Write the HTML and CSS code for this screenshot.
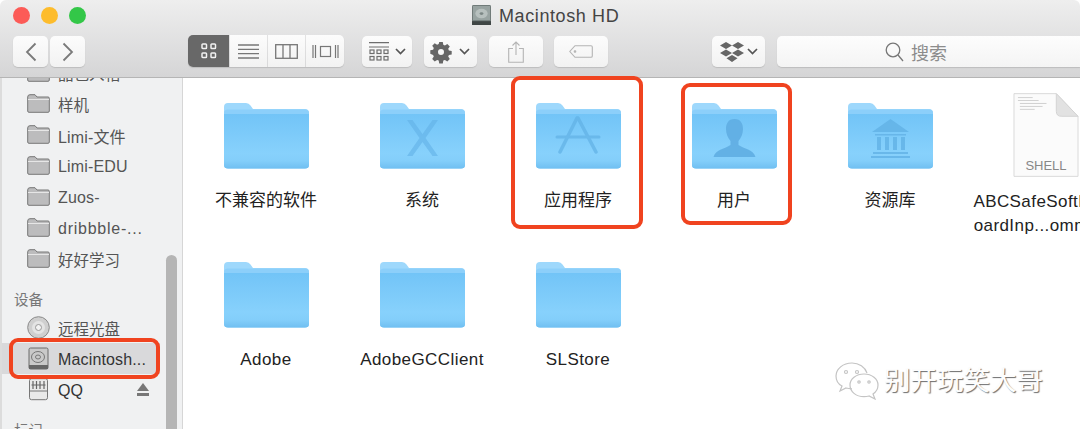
FILE: index.html
```html
<!DOCTYPE html>
<html lang="zh">
<head>
<meta charset="utf-8">
<title>Macintosh HD</title>
<link rel="stylesheet" href="styles.css">
</head>
<body>
<svg class="defs" width="0" height="0" aria-hidden="true">
  <defs>
    <linearGradient id="fb" x1="0" y1="0" x2="0" y2="1">
      <stop offset="0" stop-color="#72c4f7"/><stop offset=".72" stop-color="#87d1fc"/><stop offset=".86" stop-color="#83cefa"/><stop offset="1" stop-color="#70bfF1"/>
    </linearGradient>
    <symbol id="folder" viewBox="0 0 85 67">
      <path d="M0 5Q0 1 4 1H22Q25 1 26.500 3.500L29 7H81Q85 7 85 11V20H0Z" fill="#9ed8fc"/>
      <path d="M0 11Q0 7.500 4 7.500H81Q85 7.500 85 11V63Q85 66.500 81 66.500H4Q0 66.500 0 63Z" fill="#8ccffa"/>
      <path d="M0 12H85V63Q85 66.500 81 66.500H4Q0 66.500 0 63Z" fill="url(#fb)"/>
    </symbol>
    <symbol id="mini" viewBox="0 0 23 19">
      <path d="M.7 3Q.7 .7 3 .7H8L10 3H21Q22.300 3 22.300 4.300V17Q22.300 18.300 21 18.300H2Q.7 18.300 .7 17Z" fill="#bcbcbd" stroke="#777"/>
      <path d="M1 5.500H22" stroke="#e6e6e6"/>
    </symbol>
  </defs>
</svg>

<div class="window">
  <header class="toolbar">
    <div class="titlebar">
      <div class="lights"><i class="light red"></i><i class="light yellow"></i><i class="light green"></i></div>
      <div class="title">
        <svg class="title-icon" viewBox="0 0 20 21"><rect x="0" y="0" width="20" height="21" rx="1.500" fill="#6f7a78"/><rect x="1" y="1" width="18" height="15" fill="#98a3a1"/><ellipse cx="10" cy="9" rx="6.500" ry="5" fill="#b7c0be"/><ellipse cx="10" cy="9" rx="2" ry="1.500" fill="#7c8785"/><rect x="0" y="17" width="20" height="4" fill="#3f4645"/></svg>
        <span>Macintosh HD</span>
      </div>
    </div>
    <div class="tools">
      <div class="nav">
        <button class="btn nav-btn"><svg width="12" height="20" viewBox="0 0 12 20"><path d="M10.500 1.500L2 10l8.500 8.500" class="st"/></svg></button>
        <button class="btn nav-btn"><svg width="12" height="20" viewBox="0 0 12 20"><path d="M1.500 1.500L10 10l-8.500 8.500" class="st"/></svg></button>
      </div>
      <div class="views">
        <button class="view active"><svg width="16" height="16" viewBox="0 0 16 16" fill="none" stroke="#f2f2f2" stroke-width="1.500"><rect x="1" y="1" width="4.500" height="4.500" rx=".8"/><rect x="10" y="1" width="4.500" height="4.500" rx=".8"/><rect x="1" y="10" width="4.500" height="4.500" rx=".8"/><rect x="10" y="10" width="4.500" height="4.500" rx=".8"/></svg></button>
        <button class="view w37"><svg width="21" height="15" viewBox="0 0 21 15" stroke="#777" stroke-width="1.300"><path d="M0 1H21M0 5.300H21M0 9.600H21M0 14H21"/></svg></button>
        <button class="view w38"><svg width="23" height="15" viewBox="0 0 23 15" fill="none" stroke="#777" stroke-width="1.300"><rect x=".7" y=".7" width="21.600" height="13.600"/><path d="M8 1V14M15 1V14"/></svg></button>
        <button class="view w38"><svg width="27" height="15" viewBox="0 0 27 15" fill="none" stroke="#777" stroke-width="1.200"><rect x="8.500" y="2.500" width="10" height="10"/><path d="M1 1V14M3.500 1V14M23.500 1V14M26 1V14"/></svg></button>
      </div>
      <button class="btn w50 arrange">
        <svg width="20" height="19" viewBox="0 0 20 19" fill="none" stroke="#6e6e6e" stroke-width="1.200"><path d="M0 .7H20M0 5H20"/><rect x="1" y="8" width="4" height="3.500"/><rect x="8" y="8" width="4" height="3.500"/><rect x="15" y="8" width="4" height="3.500"/><rect x="1" y="14.500" width="4" height="3.500"/><rect x="8" y="14.500" width="4" height="3.500"/><rect x="15" y="14.500" width="4" height="3.500"/></svg>
        <svg width="11" height="7" viewBox="0 0 11 7"><path d="M1 1l4.500 4.500L10 1" class="chev"/></svg>
      </button>
      <button class="btn w53 action">
        <svg width="20" height="20" viewBox="0 0 20 20"><path d="M8.200 0h3.600l.5 2.800 1.600.7 2.400-1.600 2.500 2.500-1.600 2.400.7 1.600 2.800.5v3.600l-2.800.5-.7 1.600 1.600 2.400-2.500 2.500-2.400-1.600-1.600.7-.5 2.800H8.200l-.5-2.800-1.600-.7-2.400 1.600-2.500-2.500 1.600-2.400-.7-1.600L-.7 11.800V8.200l2.800-.5.7-1.600L1.200 3.700l2.500-2.500 2.400 1.600 1.600-.7zM10 7a3 3 0 100 6 3 3 0 000-6z" fill="#666" fill-rule="evenodd"/></svg>
        <svg width="11" height="7" viewBox="0 0 11 7"><path d="M1 1l4.500 4.500L10 1" class="chev"/></svg>
      </button>
      <button class="btn w54 share"><svg width="16" height="22" viewBox="0 0 16 22" fill="none" stroke="#b4b4b4" stroke-width="1.100"><path d="M5 7.500H.7V21.300H15.300V7.500H11M8 14V1M4.500 4.500L8 1l3.500 3.500"/></svg></button>
      <button class="btn w54 tag"><svg width="24" height="13" viewBox="0 0 24 13" fill="none" stroke="#b4b4b4" stroke-width="1.100"><path d="M6 .7H22Q23.300 .7 23.300 2V11Q23.300 12.300 22 12.300H6L.8 6.500Z"/><circle cx="6" cy="6.500" r=".8" fill="#b4b4b4"/></svg></button>
      <button class="btn w53 dropbox">
        <svg width="24" height="20" viewBox="0 0 24 20" fill="#666"><path d="M6 0l6 3.500L6 7 0 3.500zM18 0l6 3.500L18 7l-6-3.500zM6 7.500l6 3.500-6 3.500L0 11zM18 7.500l6 3.500-6 3.500-6-3.500zM12 13l5.500 3.300L12 20l-5.500-3.700z"/></svg>
        <svg width="11" height="7" viewBox="0 0 11 7"><path d="M1 1l4.500 4.500L10 1" class="chev"/></svg>
      </button>
      <div class="search">
        <svg width="19" height="20" viewBox="0 0 19 20" fill="none" stroke="#777" stroke-width="1.300"><circle cx="8" cy="8" r="6.800"/><path d="M13 13l5 6"/></svg>
        <span>搜索</span>
      </div>
    </div>
  </header>

  <div class="body">
    <aside class="sidebar">
      <div class="side-list">
        <div class="row"><svg class="side-icon"><use href="#mini"/></svg><span>品包入相</span></div>
        <div class="row"><svg class="side-icon"><use href="#mini"/></svg><span>样机</span></div>
        <div class="row"><svg class="side-icon"><use href="#mini"/></svg><span class="latin">Limi-文件</span></div>
        <div class="row"><svg class="side-icon"><use href="#mini"/></svg><span class="latin">Limi-EDU</span></div>
        <div class="row"><svg class="side-icon"><use href="#mini"/></svg><span class="latin">Zuos-</span></div>
        <div class="row"><svg class="side-icon"><use href="#mini"/></svg><span class="latin wide">dribbble-...</span></div>
        <div class="row"><svg class="side-icon"><use href="#mini"/></svg><span>好好学习</span></div>
        <div class="side-head">设备</div>
        <div class="row"><svg class="side-icon" viewBox="0 0 23 23"><circle cx="11.500" cy="11.500" r="10.800" fill="#cfcfcf" stroke="#8a8a8a"/><circle cx="11.500" cy="11.500" r="6.500" fill="#e4e4e4"/><circle cx="11.500" cy="11.500" r="3" fill="#f3f3f3" stroke="#999"/></svg><span>远程光盘</span></div>
        <div class="row selected"><svg class="side-icon" viewBox="0 0 23 23"><rect x="2" y="1" width="19" height="21" rx="1.500" fill="#c9c9c9" stroke="#6b6b6b"/><ellipse cx="11" cy="10" rx="6.500" ry="5.500" fill="none" stroke="#777"/><ellipse cx="11" cy="10" rx="2.500" ry="2" fill="none" stroke="#777"/><rect x="2" y="18" width="19" height="4" fill="#666"/></svg><span class="dark latin">Macintosh...</span></div>
        <div class="row"><svg class="side-icon" viewBox="0 0 23 23"><rect x="2.500" y=".7" width="18" height="21" rx="2" fill="#e9e9e9" stroke="#777"/><path d="M2.500 13H20.500" stroke="#777"/><path d="M6 3V11M9.500 3V11M13 3V11M17 3V11M4.500 7H18.500" stroke="#666" stroke-width="1.200"/></svg><span class="dark latin">QQ</span><svg class="eject" width="12" height="13" viewBox="0 0 12 13" fill="#777"><path d="M6 0l6 8H0zM0 10h12v3H0z"/></svg></div>
        <div class="side-head">标记</div>
      </div>
      <div class="scrollbar"><div class="thumb"></div></div>
    </aside>

    <main class="files">
      <div class="cell"><svg class="folder"><use href="#folder"/></svg><div class="label">不兼容的软件</div></div>
      <div class="cell">
        <svg class="folder" viewBox="0 0 85 67"><use href="#folder"/><path d="M27 18H32.500L42.500 32 52.500 18H58L45.500 36 58 54H52.500L42.500 40 32.500 54H27L39.500 36Z" fill="#62b2e6" opacity=".62"/></svg>
        <div class="label">系统</div>
      </div>
      <div class="cell">
        <svg class="folder" viewBox="0 0 85 67"><use href="#folder"/><g stroke="#62b2e6" stroke-width="3.500" stroke-linecap="round" fill="none" opacity=".72"><path d="M21 35H63" stroke-width="3"/><path d="M41 16L24 50"/><path d="M42 16L60 50"/></g></svg>
        <div class="label">应用程序</div>
      </div>
      <div class="cell">
        <svg class="folder" viewBox="0 0 85 67"><use href="#folder"/><path d="M42.500 17C36 17 34 22 34 27c0 5 2 9 4.500 12v4C33 47 24 47 21.500 55H63.500C61 47 52 47 46.500 43v-4C49 36 51 32 51 27c0-5-2-10-8.500-10Z" fill="#5fade2" opacity=".9"/></svg>
        <div class="label">用户</div>
      </div>
      <div class="cell">
        <svg class="folder" viewBox="0 0 85 67"><use href="#folder"/><g fill="#62b2e6" opacity=".8"><path d="M42.500 17L61 30H24ZM27 32H58V33.500H27ZM25 50H60V52H25ZM23 54H62V56H23Z"/><path d="M29 35H33V48H29ZM37 35H41V48H37ZM45 35H49V48H45ZM53 35H57V48H53Z"/></g></svg>
        <div class="label">资源库</div>
      </div>
      <div class="cell">
        <div class="doc">
          <svg class="doc-bg" viewBox="0 0 67 86"><path d="M1 1H44L66 24V85H1Z" fill="#fbfbfb" stroke="#d9d9d9"/><path d="M44 1V19Q44 24 49 24H66Z" fill="#e2e2e2" stroke="#d3d3d3"/><path d="M5 5H20M5 8H26M7 11H34M7 14H30M7 17H22" stroke="#c5c5c5" stroke-width=".8"/></svg>
          <span class="doc-type">SHELL</span>
        </div>
        <div class="label doc-label latin">ABCSafeSoftKeyb<br>oardInp...ommand</div>
      </div>
      <div class="cell"><svg class="folder"><use href="#folder"/></svg><div class="label latin">Adobe</div></div>
      <div class="cell"><svg class="folder"><use href="#folder"/></svg><div class="label latin">AdobeGCClient</div></div>
      <div class="cell"><svg class="folder"><use href="#folder"/></svg><div class="label latin">SLStore</div></div>
    </main>
  </div>

  <div class="mark mark-apps"></div>
  <div class="mark mark-users"></div>
  <div class="mark mark-hd"></div>

  <div class="watermark">
    <svg width="44" height="38" viewBox="0 0 44 38" fill="none" stroke="#c4c4c4" stroke-width="1.200"><path d="M17 1C8 1 1 7 1 14c0 4 2 8 6 10l-2 5 6-3c2 .6 4 .8 6 .8"/><path d="M17 1c7 0 13 4 15 10"/><circle cx="11" cy="10" r="1.500"/><circle cx="22" cy="10" r="1.500"/><path d="M29 12c8 0 14 5 14 11 0 4-2 7-5 9l2 5-6-3c-2 .6-3 .7-5 .7-8 0-14-5-14-11.700C15 17 21 12 29 12Z"/><circle cx="24" cy="20" r="1.200"/><circle cx="34" cy="20" r="1.200"/></svg>
    <span>别开玩笑大哥</span>
  </div>
</div>
</body>
</html>
```

FILE: styles.css
```css
* { box-sizing: border-box; }
html, body { margin: 0; padding: 0; width: 1080px; height: 429px; overflow: hidden; background: #fff; }
body { font-family: "Liberation Sans", "Noto Sans CJK SC", sans-serif; }
.defs { position: absolute; }
.window { position: relative; width: 1080px; height: 429px; overflow: hidden; display: flex; flex-direction: column; }

.toolbar {
  height: 78px;
  flex: none;
  background: linear-gradient(#eeeeee, #d5d5d6);
  border-bottom: 1px solid #b5b5b5;
  border-radius: 6px 6px 0 0;
}
.titlebar { height: 35px; display: flex; }
.lights { display: flex; gap: 11px; padding: 7px 0 0 13px; width: 472px; }
.light { width: 17px; height: 17px; border-radius: 50%; display: block; }
.red { background: #fc5b57; }
.yellow { background: #fdbc2c; }
.green { background: #33c748; }
.title { display: flex; align-items: flex-start; gap: 8px; padding-top: 5px; }
.title-icon { width: 19px; height: 20px; }
.title span { font-size: 18px; line-height: 23px; color: #444; letter-spacing: .6px; }

.tools { display: flex; height: 32px; padding-left: 13px; align-items: flex-start; }
.btn {
  height: 31px;
  margin: 1px 0 0;
  padding: 0;
  border: 0;
  border-radius: 5px;
  background: linear-gradient(#fcfcfc, #f2f2f2);
  box-shadow: 0 1px 1px #bdbdbd;
  display: flex;
  align-items: center;
  justify-content: center;
}
.st { fill: none; stroke: #7a7a7a; stroke-width: 1.800; }
.chev { fill: none; stroke: #555; stroke-width: 1.700; }
.nav { display: flex; gap: 2px; width: 175px; }
.nav-btn { width: 35px; }
.views { display: flex; height: 32px; width: 156px; border-radius: 5px; overflow: hidden; gap: 1px; box-shadow: 0 1px 1px #bdbdbd; margin-right: 18px; }
.view { border: 0; padding: 0; background: linear-gradient(#fcfcfc, #f2f2f2); display: flex; align-items: center; justify-content: center; }
.view.active { width: 42px; background: #686868; }
.w37 { width: 37px; }
.w38 { width: 38px; }
.w50 { width: 50px; }
.w53 { width: 53px; }
.w54 { width: 54px; }
.arrange { gap: 6px; margin-right: 12px; }
.action { gap: 8px; margin-right: 12px; }
.action svg:first-child { overflow: visible; }
.share { margin-right: 11px; }
.tag { margin-right: 104px; }
.dropbox { gap: 3px; margin-right: 12px; }
.search {
  flex: 1;
  height: 31px;
  margin-top: 1px;
  border-radius: 5px 0 0 5px;
  background: linear-gradient(#fdfdfd, #f4f4f4);
  box-shadow: 0 1px 1px #bdbdbd;
  display: flex;
  align-items: center;
  padding-left: 108px;
  gap: 7px;
  font-size: 18px;
  color: #8c8c8c;
}

.body { flex: 1; display: flex; min-height: 0; }
.sidebar { position: relative; width: 183px; flex: none; background: #f0f1f2; border-left: 2px solid #dcdcdc; border-right: 1px solid #d6d6d6; overflow: hidden; }
.side-list { margin: -21px 0 0 -2px; }
.row { height: 31px; display: flex; align-items: center; padding-left: 27px; font-size: 15.500px; color: #555; }
.row span { margin-left: 8px; }
.row .dark { color: #333; }
.row .latin { font-size: 16px; letter-spacing: .15px; padding-top: 2px; }
.row .wide { letter-spacing: .75px; }
.selected { background: #d9d9db; width: 160px; }
.side-icon { width: 23px; height: 19px; flex: none; }
.row:nth-child(n+9) .side-icon { height: 23px; }
.eject { margin-left: 54px; }
.side-head { height: 38px; padding: 16px 0 0 14px; font-size: 14.500px; line-height: 20px; color: #777; }
.scrollbar { position: absolute; top: 0; bottom: 0; left: 164px; width: 11px; }
.thumb { position: absolute; top: 177px; bottom: 0; left: 0; right: 0; background: #b5b5b5; border-radius: 6px 6px 0 0; }

.files { flex: 1; display: grid; grid-template-columns: repeat(6, 156px); grid-auto-rows: 159px; padding: 24px 0 0 5px; background: #fff; overflow: hidden; }
.cell { display: flex; flex-direction: column; align-items: center; }
.folder { width: 85px; height: 67px; flex: none; }
.label { margin-top: 22px; font-size: 17px; line-height: 20px; color: #222; white-space: nowrap; text-align: center; }
.label.latin { letter-spacing: .42px; }
.doc { position: relative; width: 66px; height: 86px; margin-top: -10px; flex: none; }
.doc-bg { width: 66px; height: 86px; display: block; }
.doc-type { position: absolute; left: 0; right: 0; bottom: 4px; text-align: center; font-size: 13px; line-height: 16px; color: #888; }
.label.doc-label { margin-top: 12px; line-height: 24px; }

.mark { position: absolute; border: 4px solid #f0431f; border-radius: 9px; }
.mark-apps { left: 511px; top: 76px; width: 132px; height: 153px; }
.mark-users { left: 681px; top: 83px; width: 111px; height: 142px; }
.mark-hd { left: 9px; top: 338px; width: 151px; height: 41px; }

.watermark { position: absolute; left: 835px; top: 362px; display: flex; align-items: center; gap: 5px; }
.watermark span { font-size: 26.500px; line-height: 38px; color: #fdfdfd; text-shadow: 1px 1px 1px #6d6d6d; }
```
